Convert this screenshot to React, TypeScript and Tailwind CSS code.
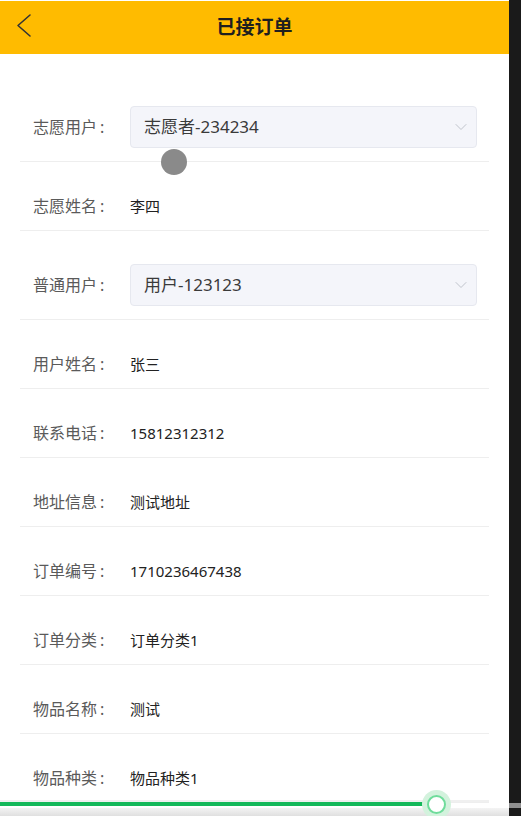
import { ChevronDown } from "lucide-react";

const rows: { label: string; value: string; select?: boolean }[] = [
  { label: "志愿用户", value: "志愿者-234234", select: true },
  { label: "志愿姓名", value: "李四" },
  { label: "普通用户", value: "用户-123123", select: true },
  { label: "用户姓名", value: "张三" },
  { label: "联系电话", value: "15812312312" },
  { label: "地址信息", value: "测试地址" },
  { label: "订单编号", value: "1710236467438" },
  { label: "订单分类", value: "订单分类1" },
  { label: "物品名称", value: "测试" },
  { label: "物品种类", value: "物品种类1" },
];

const Row = ({ label, value, select }: { label: string; value: string; select?: boolean }) => (
  <div className="flex items-center border-b border-[#eeeeee] pl-[13px] pt-[33px] pb-[13px]">
    <div className="w-[97px] shrink-0 text-[16px] leading-[22px] text-[#5a5a5a]">
      {label}
      <span className="ml-[3px]">:</span>
    </div>
    {select ? (
      <div className="mr-[12px] flex h-[42px] flex-1 items-center justify-between rounded-[4px] border border-[#e6e8ef] bg-[#f4f5fa] pl-[13px] pr-[5px]">
        <span className="text-[17px] text-[#3a3a3a]">{value}</span>
        <ChevronDown className="h-[20px] w-[20px] text-[#c0c4cc]" strokeWidth={1.2} />
      </div>
    ) : (
      <div className="text-[15px] leading-[22px] text-[#222222]">{value}</div>
    )}
  </div>
);

export default function App() {
  return (
    <div
      className="relative flex h-[816px] w-[521px] overflow-hidden bg-[#1a1a1a]"
      style={{ fontFamily: '"Noto Sans", "Noto Sans CJK SC", sans-serif' }}
    >
      <div className="flex h-full w-[509px] flex-col bg-white pt-[1px]">
        {/* 顶部栏 */}
        <div className="relative flex h-[53px] shrink-0 items-center justify-center bg-[#ffbb00]">
          <svg className="absolute left-[14px] top-[11px]" width="20" height="26" viewBox="0 0 20 26" fill="none">
            <polyline points="16,3 4,13.5 16,24" stroke="#333" strokeWidth="1.6" strokeLinecap="round" strokeLinejoin="round" />
          </svg>
          <h1 className="text-[19px] font-bold text-[#1f1f1f]">已接订单</h1>
        </div>

        {/* 订单信息 */}
        <div className="px-5 pt-[19px]">
          {rows.map((r) => (
            <Row key={r.label} {...r} />
          ))}
        </div>
      </div>

      {/* 触摸点 */}
      <div className="absolute left-[161px] top-[149px] h-[26px] w-[26px] rounded-full bg-[#8a8a8a] blur-[0.6px]" />

      {/* 底部进度条 */}
      <div className="absolute bottom-0 left-0 h-[18px] w-[509px]">
        <div className="absolute bottom-0 left-0 h-[8px] w-[509px] bg-gradient-to-b from-[#f4f4f4] to-[#e0e0e0]" />
        <div className="absolute left-0 top-[2px] h-[2px] w-[489px] bg-[#f0f0f0]" />
        <div className="absolute left-0 top-[4px] h-[4px] w-[430px] bg-[#14b85a]" />
        <div className="absolute left-[422px] top-[-8px] h-[29px] w-[29px] rounded-full bg-[#d3f2dd]" />
        <div className="absolute left-[427px] top-[-3px] h-[19px] w-[19px] rounded-full border-[2px] border-[#6fdc9b] bg-white" />
      </div>
      <div className="absolute bottom-[8px] right-0 h-[5px] w-[12px] bg-[#8f8f8f]" />
    </div>
  );
}
